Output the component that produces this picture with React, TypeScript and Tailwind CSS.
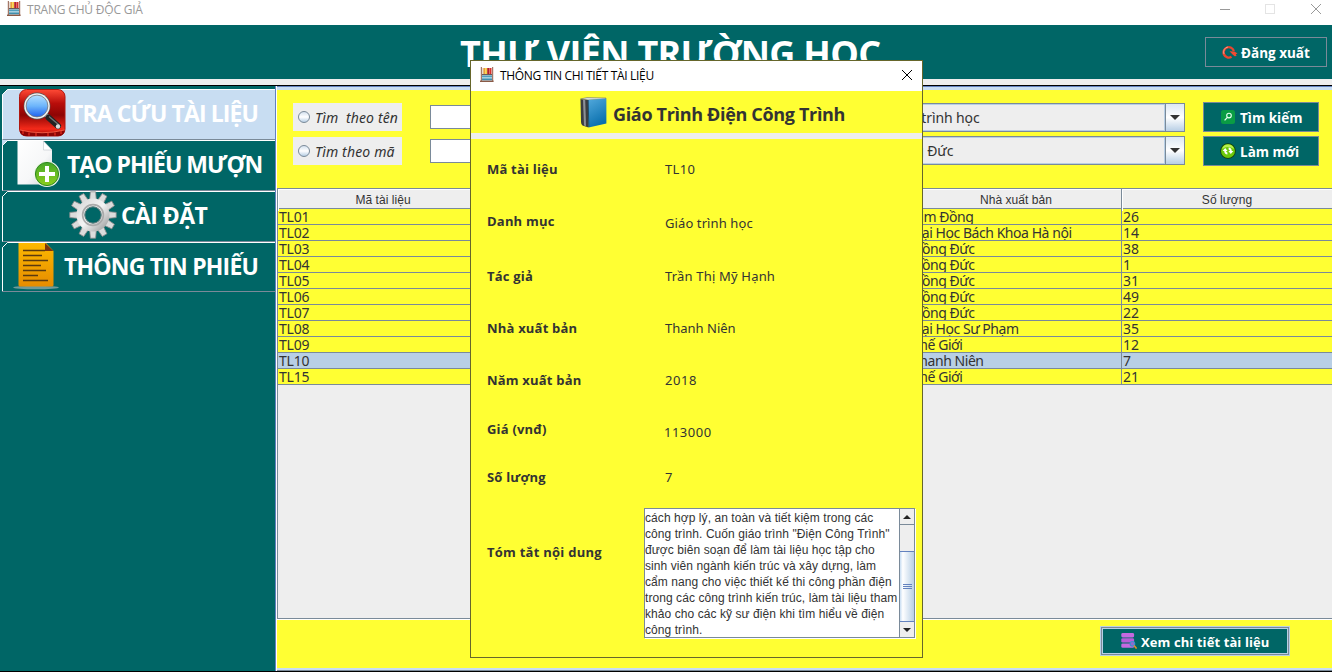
import React from "react";

function BooksIcon() {
  return (
    <svg width="14" height="15" viewBox="0 0 14 15" className="block shrink-0">
      <rect x="0.8" y="0" width="1.1" height="14" fill="#9a6a58" />
      <rect x="12.1" y="0" width="1.1" height="14" fill="#9a6a58" />
      <rect x="2" y="1" width="2" height="6" fill="#e8d9d0" />
      <rect x="3.4" y="1" width="1.9" height="6.4" fill="#e9a13a" />
      <rect x="5.3" y="1" width="1.8" height="6" fill="#f7cf3d" />
      <rect x="7.2" y="1" width="2.2" height="6" fill="#b3202a" />
      <rect x="9.5" y="1" width="2" height="6" fill="#d8322d" />
      <rect x="2" y="7" width="10" height="1.3" fill="#6a5a5a" />
      <rect x="2" y="8.5" width="10" height="2" fill="#4f9fbe" />
      <rect x="2" y="10.5" width="10" height="0.9" fill="#a5cfe0" />
      <rect x="2" y="11.4" width="10" height="2" fill="#3f8fae" />
      <rect x="0" y="13.6" width="13.6" height="1.4" fill="#8a5a46" />
    </svg>
  );
}

function SearchTile() {
  return (
    <svg width="48" height="48" viewBox="0 0 48 48" className="block shrink-0">
      <defs>
        <linearGradient id="tile" x1="0" y1="0" x2="0" y2="1">
          <stop offset="0" stopColor="#ff4a35" />
          <stop offset="0.3" stopColor="#b80d0a" />
          <stop offset="0.55" stopColor="#8e0504" />
          <stop offset="0.85" stopColor="#f52a1a" />
          <stop offset="1" stopColor="#8e0504" />
        </linearGradient>
        <linearGradient id="glass" x1="0" y1="0" x2="0" y2="1">
          <stop offset="0" stopColor="#b4e0ff" />
          <stop offset="0.5" stopColor="#6db5fb" />
          <stop offset="1" stopColor="#1f62ee" />
        </linearGradient>
      </defs>
      <rect x="1.5" y="0.5" width="45.5" height="46.5" rx="7" fill="url(#tile)" stroke="#b01810" />
      <path d="M2 41 Q24 47 46.5 41 V43 Q45 47 40 47 H8 Q3 47 2 43Z" fill="#8b0505" />
      <path d="M2 41 Q24 46.5 46.5 41" fill="none" stroke="#ff6a50" strokeWidth="0.8" />
      <path d="M5 42v3 M11 43.5v3 M18 44v3 M30 44v3 M37 43.5v3 M43 42v3" stroke="#e83020" strokeWidth="1.2" />
      <path d="M27 25 L32 29" stroke="#d8d8d8" strokeWidth="4" />
      <path d="M30.5 28.5 L40 37" stroke="#222" strokeWidth="6" strokeLinecap="round" />
      <path d="M31 27.5 L41 36" stroke="#777" strokeWidth="1.2" />
      <circle cx="40" cy="37.5" r="2.2" fill="#ddd" />
      <circle cx="19" cy="17" r="13.4" fill="#555" />
      <circle cx="19" cy="17" r="12.8" fill="#f0f0f0" />
      <circle cx="19" cy="17" r="10.9" fill="url(#glass)" stroke="#777" strokeWidth="0.8" />
    </svg>
  );
}

function AddPageIcon() {
  return (
    <svg width="43" height="48" viewBox="0 0 43 48" className="block shrink-0">
      <defs>
        <linearGradient id="page" x1="0" y1="0" x2="1" y2="1">
          <stop offset="0" stopColor="#ffffff" />
          <stop offset="0.6" stopColor="#f6f7f8" />
          <stop offset="1" stopColor="#c9ced4" />
        </linearGradient>
        <linearGradient id="green" x1="0" y1="0" x2="0" y2="1">
          <stop offset="0" stopColor="#46a82a" />
          <stop offset="1" stopColor="#8ccf1c" />
        </linearGradient>
      </defs>
      <path d="M0.5 1 H26 L35 10 V44.5 H0.5Z" fill="url(#page)" />
      <path d="M26.5 1 V10 H35Z" fill="#fff" stroke="#bfc5ca" strokeWidth="0.6" />
      <circle cx="30" cy="34" r="13" fill="#eef6e8" />
      <circle cx="30" cy="34" r="11.6" fill="url(#green)" stroke="#2e8a20" strokeWidth="1" />
      <path d="M30 26 V42 M22 34 H38" stroke="#fff" strokeWidth="4" />
    </svg>
  );
}

const TEETH = [0, 30, 60, 90, 120, 150, 180, 210, 240, 270, 300, 330];

function GearIcon() {
  return (
    <svg width="48" height="48" viewBox="0 0 48 48" className="block shrink-0">
      <defs>
        <linearGradient id="metal" x1="0" y1="0" x2="1" y2="1">
          <stop offset="0" stopColor="#dddddd" />
          <stop offset="0.5" stopColor="#f4f4f4" />
          <stop offset="1" stopColor="#a9a9a9" />
        </linearGradient>
      </defs>
      {TEETH.map((a) => (
        <path key={a} d="M20.6 10 L21.4 0.8 H26.6 L27.4 10Z" fill="#dcdcdc" stroke="#8d8d8d" strokeWidth="0.8" transform={`rotate(${a} 24 24)`} />
      ))}
      <circle cx="24" cy="24" r="12.5" fill="none" stroke="url(#metal)" strokeWidth="8" />
      <circle cx="24" cy="24" r="10.4" fill="none" stroke="#aaa" strokeWidth="1.6" />
      <circle cx="24" cy="24" r="8.2" fill="#006666" stroke="#8b8b8b" strokeWidth="0.8" />
    </svg>
  );
}

function NoteIcon() {
  return (
    <svg width="46" height="48" viewBox="0 0 46 48" className="block shrink-0">
      <defs>
        <linearGradient id="note" x1="0" y1="0" x2="0" y2="1">
          <stop offset="0" stopColor="#fdb900" />
          <stop offset="1" stopColor="#e68c00" />
        </linearGradient>
      </defs>
      <ellipse cx="23" cy="45.5" rx="23" ry="1.8" fill="#6f9a98" />
      <path d="M6 1 H33 L40.5 9 V43 Q40.5 44.5 39 44.5 H7 Q5.5 44.5 5.5 43 V1Z" fill="url(#note)" />
      <path d="M32 1 L40.5 9 H32Z" fill="#7a3410" />
      <path d="M10 8.5h22 M10 13.5h19 M10 18.5h25 M10 23.5h18 M10 28.5h23 M10 33.5h15 M10 38.5h25" stroke="#5a3a10" strokeWidth="1.6" />
    </svg>
  );
}

function LogoutIcon() {
  return (
    <svg width="16" height="16" viewBox="0 0 16 16" className="block shrink-0">
      <path d="M9.5 12.8 A5.2 5.2 0 1 1 11.8 7" fill="none" stroke="#e8452f" strokeWidth="2.4" />
      <path d="M7.5 7.2 L12.5 7.6 L15.5 9.4 L13.8 10.2 L14.6 12 L12.6 12.3 L10.6 10.4Z" fill="#f04a32" />
      <path d="M2 10 A5 5 0 0 1 6 3" fill="none" stroke="#ffd0c0" strokeWidth="0.6" />
    </svg>
  );
}

function FindIcon() {
  return (
    <svg width="14" height="14" viewBox="0 0 14 14" className="block shrink-0">
      <rect width="14" height="14" rx="2.5" fill="#0a9c44" />
      <circle cx="8" cy="5.6" r="2.3" fill="none" stroke="#e6fff0" strokeWidth="1.1" />
      <path d="M6.4 7.4 L3.6 10.4" stroke="#e6fff0" strokeWidth="1.3" />
    </svg>
  );
}

function RefreshIcon() {
  return (
    <svg width="16" height="16" viewBox="0 0 16 16" className="block shrink-0">
      <circle cx="8" cy="8" r="7.8" fill="#123c08" />
      <circle cx="8" cy="8" r="7" fill="#6cc80c" />
      <path d="M2 6 A6.3 6.3 0 0 1 14 6 Q8 2 2 6Z" fill="#b6ee50" />
      <path d="M5.2 5 L2.6 8 H4.2 Q4.4 11.3 7.4 11.4 V9.6 Q6.1 9.4 6.1 8 H7.6Z" fill="#fff" />
      <path d="M10.8 11 L13.4 8 H11.8 Q11.6 4.7 8.6 4.6 V6.4 Q9.9 6.6 9.9 8 H8.4Z" fill="#fff" />
    </svg>
  );
}

function DatabaseIcon() {
  return (
    <svg width="16" height="16" viewBox="0 0 16 16" className="block shrink-0">
      <rect x="0.3" y="0" width="12.8" height="4.4" rx="1.4" fill="#c569e0" />
      <rect x="0.3" y="5.2" width="12.8" height="4.4" rx="1.4" fill="#b95cd8" />
      <rect x="0.3" y="10.4" width="12.8" height="4.4" rx="1.4" fill="#c569e0" />
      <circle cx="11.4" cy="10.8" r="2.3" fill="#8f6bd0" stroke="#3e8fd0" strokeWidth="1.2" />
      <path d="M13 12.6 L15.6 15.6" stroke="#e0902c" strokeWidth="1.6" />
    </svg>
  );
}

function BookIcon() {
  return (
    <svg width="27" height="31" viewBox="0 0 27 31" className="block shrink-0">
      <defs>
        <linearGradient id="cover" x1="0" y1="0" x2="0.4" y2="1">
          <stop offset="0" stopColor="#52a9dc" />
          <stop offset="1" stopColor="#0a70ae" />
        </linearGradient>
      </defs>
      <path d="M0.5 2 L7 0.6 L26 1 L25.5 2 L8 3Z" fill="#dfe4e8" stroke="#555" strokeWidth="0.5" />
      <path d="M0.5 2.2 L8 3 L8.5 30.5 L2.5 28.5 Q1 27.5 1 25Z" fill="#3b3d40" />
      <path d="M3 2.6 L5.2 2.8 L6 29 L4 28.4Z" fill="#8d9196" />
      <path d="M8 3 L26.4 1.6 V26.6 L8.6 30.5Z" fill="url(#cover)" />
      <path d="M8.2 3 L8.8 30" stroke="#1d4c6c" strokeWidth="1" />
    </svg>
  );
}

const ui = "font-['Open_Sans','Noto_Sans',sans-serif] whitespace-nowrap";
const body = "font-['Noto_Sans',sans-serif] whitespace-nowrap";

const tabs = [
  { label: "TRA CỨU TÀI LIỆU", icon: <SearchTile />, box: "-mr-[2px] h-[51px] border-b bg-[#c8ddf2]", pad: "pl-[15px] gap-[4px]", track: "tracking-[-0.9px]", corner: "#006666" },
  { label: "TẠO PHIẾU MƯỢN", icon: <AddPageIcon />, box: "h-[51px] border-b", pad: "pl-[14px] gap-[7px]", track: "tracking-[-1px]", corner: "#c8ddf2" },
  { label: "CÀI ĐẶT", icon: <GearIcon />, box: "h-[51px] border-b", pad: "pl-[66px] gap-[4px]", track: "tracking-[-0.6px]", corner: "#006666" },
  { label: "THÔNG TIN PHIẾU", icon: <NoteIcon />, box: "h-[49px]", pad: "pl-[10px] gap-[5px]", track: "tracking-[-0.8px]", corner: "#006666" },
];

function Sidebar() {
  return (
    <nav className="flex w-[277px] shrink-0 flex-col border-r border-white bg-[#006666] pt-[3px] shadow-[inset_-1px_0_0_#6382bf]">
      {tabs.map((t) => (
        <div key={t.label} className={"relative ml-[2px] mr-px flex items-start border-l border-t border-b-[#7a8a99] border-l-white border-t-white " + t.box}>
          <svg width="6" height="6" viewBox="0 0 6 6" className="absolute -left-px -top-px">
            <path d="M0 0H6L0 6Z" fill={t.corner} />
            <path d="M0.5 6V5.5L5.5 0.5H6" fill="none" stroke="#fff" />
          </svg>
          <div className={"-mt-px flex h-[48px] w-full items-start " + t.pad}>
            {t.icon}
            <span className={ui + " text-[23px] font-bold leading-[48px] text-white " + t.track}>{t.label}</span>
          </div>
        </div>
      ))}
      <div className="ml-[2px] h-px shrink-0 bg-[#7a8a99]" />
    </nav>
  );
}

function Radio({ label }: { label: string }) {
  return (
    <div className="flex h-[28px] w-[109px] items-center gap-[5px] bg-[#eeeeee] pl-[5px]">
      <span className="h-[12px] w-[12px] shrink-0 rounded-full border border-[#7a8a99] bg-linear-to-b from-[#d5e2ef] via-white to-[#b8cfe5]" />
      <span className={body + " whitespace-pre pt-[2px] text-[14px] italic leading-[26px] tracking-[0.15px] text-[#333]"}>{label}</span>
    </div>
  );
}

function Combo({ value }: { value: string }) {
  return (
    <div className="flex h-[29px] w-[309px] border border-[#7a8a99]">
      <div className="flex flex-1 items-center border border-[#b8cfe5] bg-[#eeeeee] pl-[10px]">
        <span className={body + " text-[14px] tracking-[-0.1px] text-[#333]"}>{value}</span>
      </div>
      <div className="flex w-[19px] items-center justify-center border-l border-[#7a8a99] bg-linear-to-b from-[#dde8f3] via-white to-[#b8cfe5]">
        <svg width="10" height="5" viewBox="0 0 10 5"><path d="M0 0H10L5 5Z" fill="#333" /></svg>
      </div>
    </div>
  );
}

function ActionButton({ icon, label, pad }: { icon: React.ReactNode; label: string; pad: string }) {
  return (
    <button className={"flex h-[30px] w-[116px] items-center border border-[#7a8a99] bg-[#006666] " + pad}>
      {icon}
      <span className={ui + " pt-[2px] text-[13.5px] font-bold text-white"}>{label}</span>
    </button>
  );
}

const rows = [
  ["TL01", "Kim Đồng", "26"],
  ["TL02", "Đại Học Bách Khoa Hà nội", "14"],
  ["TL03", "Hồng Đức", "38"],
  ["TL04", "Hồng Đức", "1"],
  ["TL05", "Hồng Đức", "31"],
  ["TL06", "Hồng Đức", "49"],
  ["TL07", "Hồng Đức", "22"],
  ["TL08", "Đại Học Sư Phạm", "35"],
  ["TL09", "Thế Giới", "12"],
  ["TL10", "Thanh Niên", "7"],
  ["TL15", "Thế Giới", "21"],
];

const cols = "grid grid-cols-[211px_211px_211px_211px_211px]";

function DataTable() {
  return (
    <div className="h-[432px] overflow-hidden border-b border-white">
      <div className="h-[431px] overflow-hidden border-b border-l border-t border-[#7a8a99] bg-[#eeeeee]">
        <div className={cols + " h-[20px] border-b border-[#7a8a99] font-['Liberation_Sans',sans-serif] text-[12px] leading-[22px] text-[#333]"}>
          {["Mã tài liệu", "", "", "Nhà xuất bản", "Số lượng"].map((h, i) => (
            <div key={i} className="border-r border-[#7a8a99] text-center tracking-[0.05px] shadow-[inset_1px_1px_0_#fff]">{h}</div>
          ))}
        </div>
        {rows.map(([id, pub, n]) => (
          <div key={id} className={cols + " h-[16px] " + (id === "TL10" ? "bg-[#b8cfe5]" : "bg-[#ffff33]")}>
            {[id, "", "", pub, n].map((v, i) => (
              <div key={i} className={body + " overflow-hidden border-b border-r border-[#7a8a99] pl-px text-[14px] leading-[15px] text-[#333] " + (i === 3 ? "tracking-[-0.45px]" : i === 0 ? "tracking-[-0.2px]" : "")}>{v}</div>
            ))}
          </div>
        ))}
      </div>
    </div>
  );
}

const details = [
  { k: "Mã tài liệu", v: "TL10", m: "mt-[20px]", o: "tracking-[0.3px]" },
  { k: "Danh mục", v: "Giáo trình học", m: "mt-[32px]", o: "pt-[2px] tracking-[0.1px]" },
  { k: "Tác giả", v: "Trần Thị Mỹ Hạnh", m: "mt-[35px]", o: "tracking-[0.18px]" },
  { k: "Nhà xuất bản", v: "Thanh Niên", m: "mt-[32px]", o: "" },
  { k: "Năm xuất bản", v: "2018", m: "mt-[32px]", o: "tracking-[0.6px]" },
  { k: "Giá (vnđ)", v: "113000", m: "mt-[29px]", o: "pt-[3px] -ml-px tracking-[0.5px]" },
  { k: "Số lượng", v: "7", m: "mt-[28px]", o: "" },
];

const summary = [
  "cách hợp lý, an toàn và tiết kiệm trong các",
  "công trình. Cuốn giáo trình \"Điện Công Trình\"",
  "được biên soạn để làm tài liệu học tập cho",
  "sinh viên ngành kiến trúc và xây dựng, làm",
  "cẩm nang cho việc thiết kế thi công phần điện",
  "trong các công trình kiến trúc, làm tài liệu tham",
  "khảo cho các kỹ sư điện khi tìm hiểu về điện",
  "công trình.",
];

function ScrollBar() {
  return (
    <div className="flex w-[15px] flex-col border-l border-[#7a8a99] bg-[#eeeeee]">
      <div className="flex h-[16px] items-center justify-center border-b border-[#7a8a99]">
        <svg width="8" height="4" viewBox="0 0 8 4"><path d="M0 4H8L4 0Z" fill="#222" /></svg>
      </div>
      <div className="h-[26px]" />
      <div className="flex flex-1 flex-col items-center justify-center gap-px border-y border-[#6382bf] bg-linear-to-r from-[#c8ddf2] via-white via-20% to-[#b8cfe5]">
        <div className="h-px w-[9px] bg-[#6382bf]" />
        <div className="h-px w-[9px] bg-[#6382bf]" />
        <div className="h-px w-[9px] bg-[#6382bf]" />
      </div>
      <div className="flex h-[15px] items-center justify-center">
        <svg width="8" height="4" viewBox="0 0 8 4"><path d="M0 0H8L4 4Z" fill="#222" /></svg>
      </div>
    </div>
  );
}

function DetailDialog() {
  return (
    <div className="absolute left-[470px] top-[60px] flex h-[598px] w-[453px] flex-col border border-[#66662b] bg-[#ffff33]">
      <div className="flex h-[30px] shrink-0 items-center bg-white pl-[9px] pr-[9px]">
        <div className="-mt-[3px]">
          <BooksIcon />
        </div>
        <span className={ui + " ml-[6px] flex-1 text-[12px] tracking-[-0.33px] text-black"}>THÔNG TIN CHI TIẾT TÀI LIỆU</span>
        <svg width="12" height="12" viewBox="0 0 12 12" className="-mt-[3px]"><path d="M1 1L11 11M11 1L1 11" stroke="#000" /></svg>
      </div>
      <div className="flex h-[42px] shrink-0 items-center gap-[6px] pl-[109px]">
        <BookIcon />
        <span className={ui + " pt-[4px] text-[18px] font-bold tracking-[-0.33px] text-[#333]"}>Giáo Trình Điện Công Trình</span>
      </div>
      <div className="h-[6px] shrink-0 bg-[#eeeeee]" />
      {details.map((d) => (
        <div key={d.k} className={"flex h-[20px] shrink-0 items-start pl-[16px] " + d.m}>
          <span className={ui + " w-[178px] text-[13px] font-bold leading-[20px] tracking-[0.2px] text-[#333]"}>{d.k}</span>
          <span className={body + " text-[13px] leading-[20px] text-[#333] " + d.o}>{d.v}</span>
        </div>
      ))}
      <div className="mt-[21px] flex h-[131px] shrink-0 pl-[16px]">
        <span className={ui + " w-[157px] pt-[34px] text-[13px] font-bold leading-[20px] tracking-[0.25px] text-[#333]"}>Tóm tắt nội dung</span>
        <div className="flex h-[130px] w-[271px] border border-[#7a8a99] bg-white shadow-[1px_1px_0_#fff]">
          <div className="flex-1 whitespace-nowrap pt-px font-['Liberation_Sans',sans-serif] text-[12px] leading-[16px] tracking-[0.07px] text-[#333]">
            {summary.map((s) => (
              <div key={s}>{s}</div>
            ))}
          </div>
          <ScrollBar />
        </div>
      </div>
    </div>
  );
}

export default function App() {
  return (
    <div className="relative flex h-[672px] w-[1332px] flex-col overflow-hidden bg-[#eeeeee]">
      <div className="flex h-[25px] shrink-0 items-start bg-white pl-[7px] pr-[10px] pt-px">
        <BooksIcon />
        <span className={ui + " ml-[6px] flex-1 text-[12px] leading-[17px] tracking-[-0.2px] text-[#999]"}>TRANG CHỦ ĐỘC GIẢ</span>
        <svg width="102" height="18" viewBox="0 0 102 18">
          <path d="M0 8.5H10" stroke="#999" />
          <rect x="45.5" y="3.5" width="9" height="9" fill="none" stroke="#e4e4e4" />
          <path d="M91 3L101 13M101 3L91 13" stroke="#999" />
        </svg>
      </div>
      <header className="flex h-[54px] shrink-0 overflow-hidden bg-[#006666]">
        <h1 className={ui + " w-[1205px] pl-[460px] text-[36px] font-bold leading-[57px] tracking-[-0.7px] text-white"}>THƯ VIỆN TRƯỜNG HỌC</h1>
        <button className="mt-[12px] flex h-[30px] w-[122px] items-center gap-[3px] border border-[#7a8a99] pl-[16px]">
          <LogoutIcon />
          <span className={ui + " pt-[2px] text-[13.5px] font-bold text-white"}>Đăng xuất</span>
        </button>
      </header>
      <div className="h-[7px] shrink-0 border-b border-black bg-[#eeeeee]" />
      <div className="flex h-[585px] shrink-0">
        <Sidebar />
        <main className="flex w-[1055px] flex-col border-t border-[#6382bf] bg-[#ffff33]">
          <div className="h-[3px] shrink-0 bg-[#c8ddf2]" />
          <section className="flex h-[98px] shrink-0 items-start">
            <div className="flex flex-col gap-[6px] pl-[16px] pt-[13px]">
              <Radio label="Tìm  theo tên" />
              <Radio label="Tìm theo mã" />
            </div>
            <div className="ml-[28px] flex flex-col gap-[10px] pt-[15px]">
              <div className="h-[24px] w-[300px] border border-[#7a8a99] bg-white" />
              <div className="h-[24px] w-[300px] border border-[#7a8a99] bg-white" />
            </div>
            <div className="ml-[146px] flex flex-col gap-[4px] pt-[13px]">
              <Combo value="Giáo trình học" />
              <Combo value="Hồng Đức" />
            </div>
            <div className="ml-[18px] flex flex-col gap-[4px] pt-[12px]">
              <ActionButton icon={<FindIcon />} label="Tìm kiếm" pad="pl-[17px] gap-[5px]" />
              <ActionButton icon={<RefreshIcon />} label="Làm mới" pad="pl-[16px] gap-[4px]" />
            </div>
          </section>
          <DataTable />
          <footer className="flex h-[48px] shrink-0 items-start pl-[823px] pt-[6px]">
            <button className="flex h-[30px] w-[190px] items-center gap-[4px] border border-[#b8cfe5] bg-[#006666] pl-[20px] shadow-[inset_0_0_0_1px_#7a8a99,inset_0_0_0_2px_#b8cfe5]">
              <DatabaseIcon />
              <span className={ui + " pt-[3px] text-[13px] font-bold tracking-[0.1px] text-white"}>Xem chi tiết tài liệu</span>
            </button>
          </footer>
          <div className="h-[3px] shrink-0 border-b border-[#7a8a99] bg-[#c8ddf2]" />
        </main>
      </div>
      <div className="h-px shrink-0 bg-black" />
      <DetailDialog />
    </div>
  );
}
